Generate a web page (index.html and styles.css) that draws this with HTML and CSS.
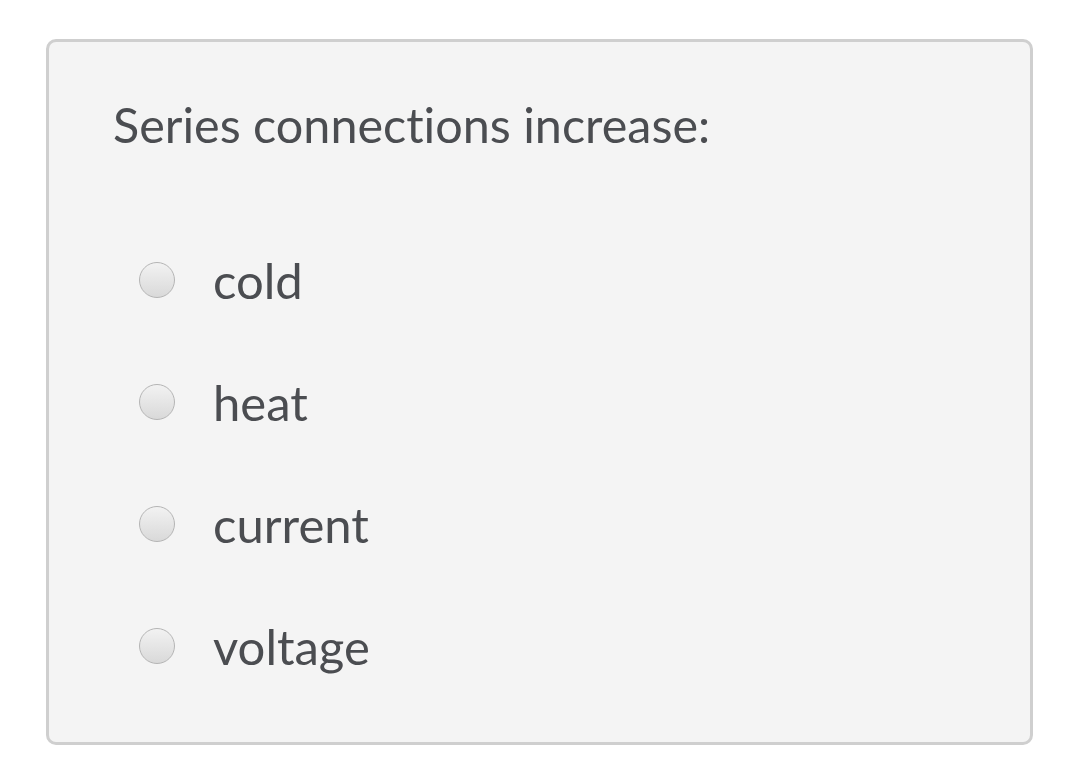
FILE: index.html
```html
<!DOCTYPE html>
<html>
<head>
<meta charset="utf-8">
<link rel="stylesheet" href="styles.css">
</head>
<body>
<div class="card">
  <div class="question">Series connections increase:</div>
  <div class="options">
    <label class="option"><span class="radio"></span><span class="label">cold</span></label>
    <label class="option"><span class="radio"></span><span class="label">heat</span></label>
    <label class="option"><span class="radio"></span><span class="label">current</span></label>
    <label class="option"><span class="radio"></span><span class="label">voltage</span></label>
  </div>
</div>
</body>
</html>
```
FILE: styles.css
```css
html, body {
  margin: 0;
  padding: 0;
  background: #ffffff;
}
body {
  padding: 39px 0 0 46px;
  font-family: Lato, "Liberation Sans", sans-serif;
  font-variant-ligatures: none;
  color: #4b4d51;
}
.card {
  box-sizing: border-box;
  width: 987px;
  height: 706px;
  border: 3px solid #cfcfcf;
  border-radius: 10px;
  background: #f4f4f4;
  padding: 52px 0 0 64px;
}
.question {
  font-size: 48.5px;
  line-height: 60px;
}
.options {
  display: flex;
  flex-direction: column;
  gap: 62px;
  margin-top: 96px;
  padding-left: 26px;
}
.option {
  display: flex;
  align-items: center;
  height: 60px;
}
.radio {
  box-sizing: border-box;
  width: 36px;
  height: 36px;
  border-radius: 50%;
  border: 1.5px solid #b5b5b5;
  background: linear-gradient(#f2f2f2, #d9d9d9);
  flex: none;
}
.label {
  font-size: 49px;
  margin-left: 38px;
}
```
